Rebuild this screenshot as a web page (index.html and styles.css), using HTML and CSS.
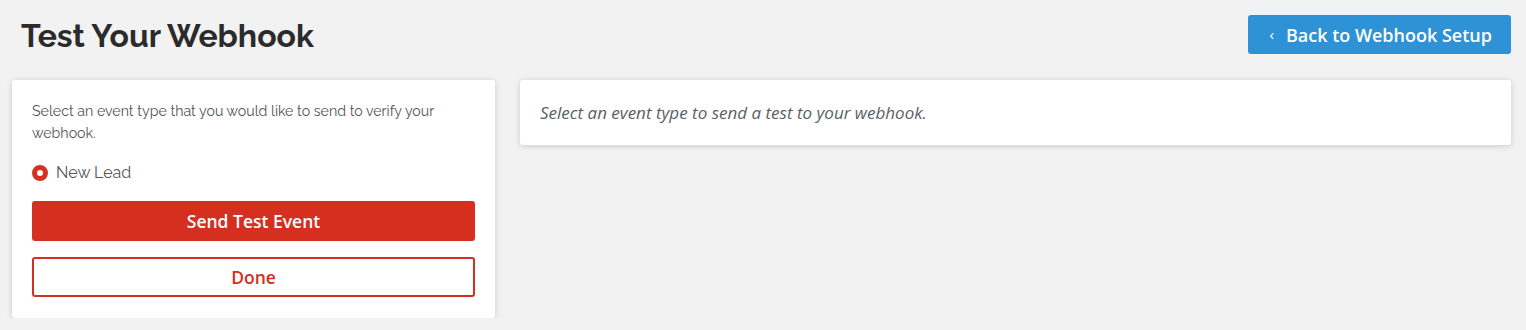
FILE: index.html
```html
<!DOCTYPE html>
<html lang="en">
<head>
  <meta charset="UTF-8" />
  <meta name="viewport" content="width=device-width, initial-scale=1.0"/>
  <title>Test Your Webhook</title>
  <link rel="stylesheet" href="styles.css">
</head>
<body>
  <div class="page">
    <div class="page-header">
      <h1>Test Your Webhook</h1>
      <a href="#" class="back-btn"><span class="chev">&lsaquo;</span> Back to Webhook Setup</a>
    </div>

    <div class="content">
      <div class="card event-card">
        <p class="intro">Select an event type that you would like to send to verify your webhook.</p>
        <label class="radio">
          <input type="radio" name="event" value="new_lead" checked />
          <span class="dot"></span>
          New Lead
        </label>
        <button class="btn btn-red">Send Test Event</button>
        <button class="btn btn-outline">Done</button>
      </div>

      <div class="card result-card">
        <p class="hint">Select an event type to send a test to your webhook.</p>
      </div>
    </div>
  </div>
</body>
</html>
```

FILE: styles.css
```css
body {
  margin: 0;
  background: #f2f2f2;
  font-family: 'Open Sans', sans-serif;
}

.page {
  padding: 0 15px 0 12px;
}

.page-header {
  display: flex;
  justify-content: space-between;
  align-items: center;
  height: 69px;
}

.page-header h1 {
  margin: 2px 0 0 9px;
  font-family: 'Raleway', 'Lato', sans-serif;
  font-size: 32px;
  font-weight: 700;
  color: #2b2b2b;
}

.back-btn {
  display: flex;
  align-items: center;
  height: 39px;
  padding: 0 19px 0 21px;
  background-color: #2d92d6;
  color: #fff;
  border-radius: 3px;
  font-size: 18px;
  font-weight: 600;
  text-decoration: none;
}

.back-btn .chev {
  font-size: 15px;
  font-weight: 400;
  margin-right: 12px;
  position: relative;
  top: -1px;
}

.content {
  display: flex;
  align-items: flex-start;
  gap: 25px;
  margin-top: 11px;
}

.card {
  background: #fff;
  border-radius: 3px;
  box-shadow: 0 1px 6px rgba(0, 0, 0, 0.16);
}

.event-card {
  width: 443px;
  flex-shrink: 0;
  padding: 20px 20px 21px;
}

.intro {
  margin: 0;
  font-family: 'Raleway', 'Lato', sans-serif;
  font-size: 14.2px;
  line-height: 22px;
  color: #555;
}

.radio {
  display: flex;
  align-items: center;
  margin: 19px 0 19px;
  font-family: 'Raleway', 'Lato', sans-serif;
  font-size: 16px;
  color: #555;
  cursor: pointer;
}

.radio input {
  display: none;
}

.radio .dot {
  width: 16px;
  height: 16px;
  box-sizing: border-box;
  border-radius: 50%;
  border: 5px solid #d63020;
  background: #fff;
  margin-right: 8px;
}

.btn {
  display: block;
  width: 100%;
  height: 40px;
  border-radius: 3px;
  font-family: 'Open Sans', sans-serif;
  font-size: 17.5px;
  font-weight: 600;
  cursor: pointer;
}

.btn-red {
  background-color: #d52f20;
  color: #fff;
  border: none;
}

.btn-outline {
  margin-top: 16px;
  background: #fff;
  color: #d52f20;
  border: 2px solid #d52f20;
}

.result-card {
  flex: 1;
  height: 65px;
  display: flex;
  align-items: center;
  padding: 0 20px;
}

.hint {
  margin: 0;
  font-style: italic;
  font-size: 17px;
  color: #5a5e66;
}
```
